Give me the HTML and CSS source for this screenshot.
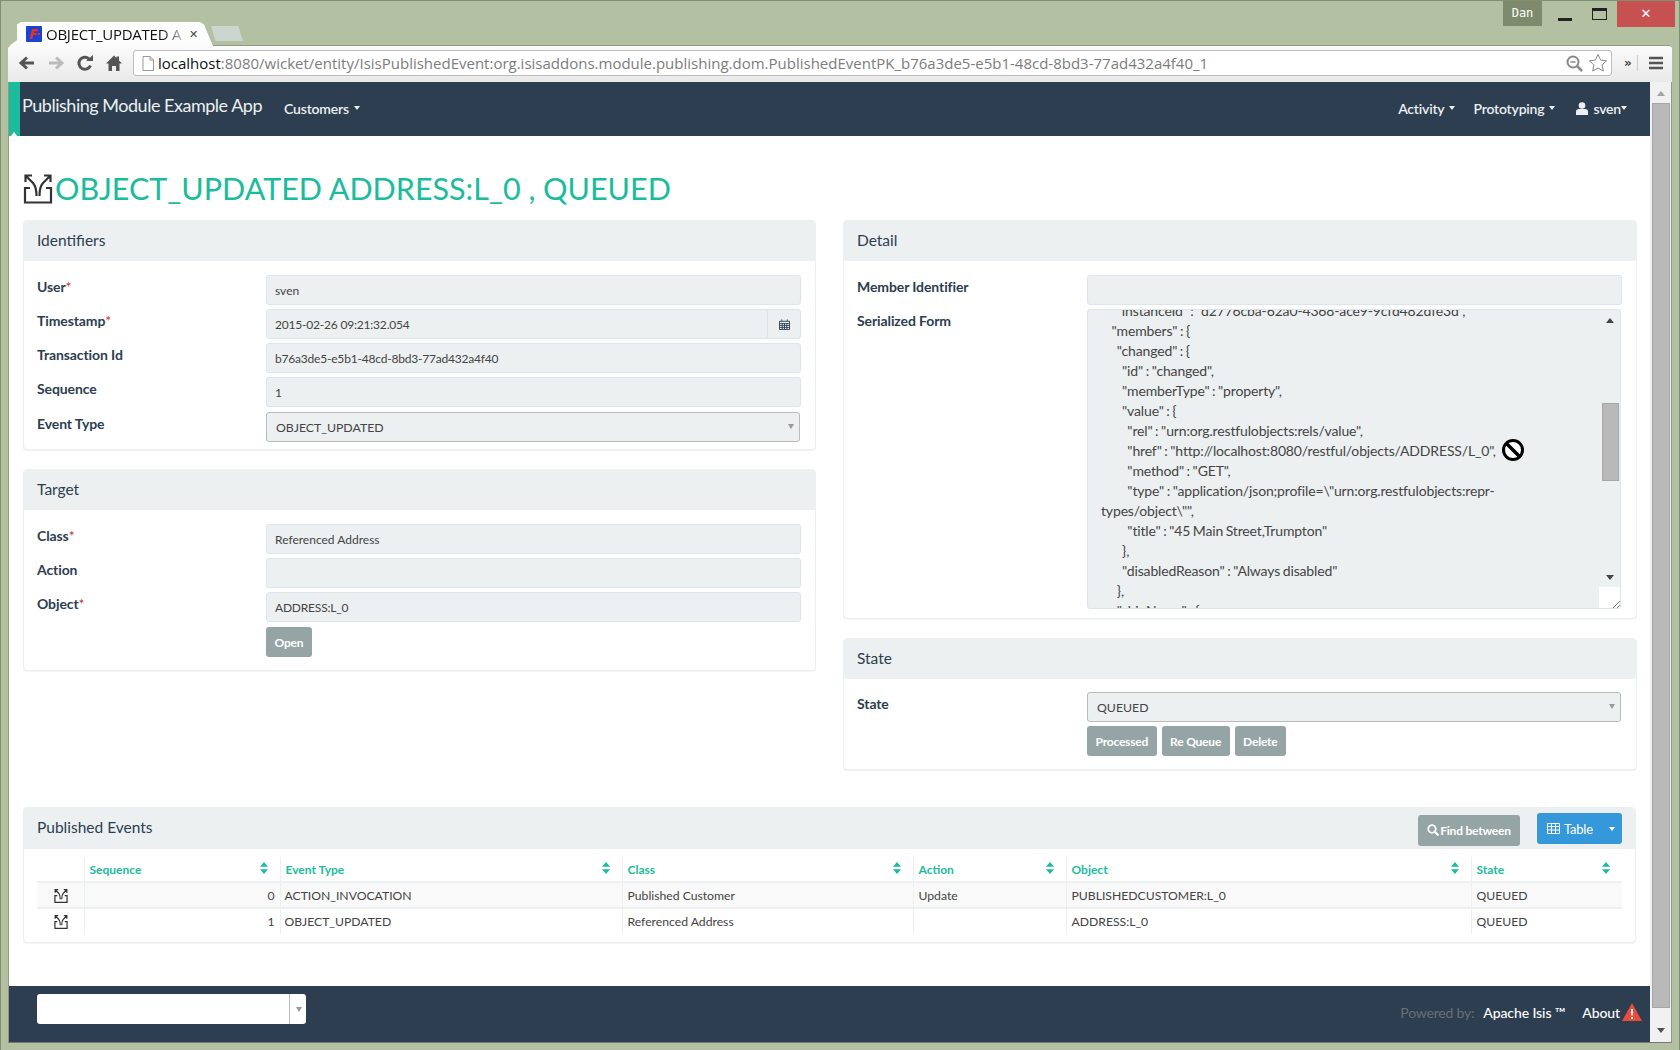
FILE: index.html
```html
<!DOCTYPE html>
<html lang="en">
<head>
<meta charset="utf-8">
<title>OBJECT_UPDATED ADDRESS:L_0 , QUEUED</title>
<link rel="stylesheet" href="styles.css">
</head>
<body>
<div class="window">
  <div class="titlebar">
    <div class="tabs">
      <div class="tab">
        <svg class="favicon" viewBox="0 0 16 16"><rect width="16" height="16" rx="1" fill="#1a43d6"/><path d="M6 3H12L11.3 5.500H8.200L7.800 7H11L10.400 9H7.200L6.400 13H3.600Z" fill="#e8321c"/><rect x="12" y="7" width="2" height="2" fill="#e8321c"/></svg>
        <span class="tab-title">OBJECT_UPDATED A</span>
        <span class="tab-close">✕</span>
      </div>
      <div class="tab-new"></div>
    </div>
    <div class="winctl">
      <div class="user-badge">Dan</div>
      <div class="win-btn"><span class="win-min"></span></div>
      <div class="win-btn"><span class="win-max"></span></div>
      <div class="win-close">✕</div>
    </div>
  </div>
  <div class="toolbar">
    <div class="tool"><svg viewBox="0 0 18 18" class="ticon"><path d="M16 9H4M9 3.500 3 9l6 5.500" fill="none" stroke="#555" stroke-width="3"/></svg></div>
    <div class="tool"><svg viewBox="0 0 18 18" class="ticon"><path d="M2 9H14M9 3.500 15 9l-6 5.500" fill="none" stroke="#bbb" stroke-width="3"/></svg></div>
    <div class="tool"><svg viewBox="0 0 18 18" class="ticon"><path d="M14.500 11.500A6 6 0 1 1 13 4.800" fill="none" stroke="#555" stroke-width="3"/><path d="M10 7H17V1Z" fill="#555"/></svg></div>
    <div class="tool"><svg viewBox="0 0 18 18" class="ticon"><path d="M9 1.500 1 9.500h2.500V17H7v-5h4v5h3.500V9.500H17l-3-3V2.500h-2.500V4Z" fill="#555"/></svg></div>
    <div class="address">
      <svg class="doc" viewBox="0 0 12 15"><path d="M1 .5H8L11.500 4V14.500H1Z M8 .5V4h3.500" fill="#fff" stroke="#999"/></svg>
      <span class="url"><span class="host">localhost</span>:8080/wicket/entity/IsisPublishedEvent:org.isisaddons.module.publishing.dom.PublishedEventPK_b76a3de5-e5b1-48cd-8bd3-77ad432a4f40_1</span>
      <svg class="zoomglass" viewBox="0 0 17 17"><circle cx="7" cy="7" r="5.500" fill="none" stroke="#8a8a8a" stroke-width="2"/><path d="M11 11l5 5" stroke="#8a8a8a" stroke-width="2.500"/><path d="M4.500 7h5" stroke="#8a8a8a" stroke-width="1.500"/></svg>
      <svg class="star" viewBox="0 0 20 20"><path d="M10 1.500l2.600 5.600 6 .7-4.500 4.100 1.200 6.100L10 15l-5.300 3 1.200-6.100L1.400 7.800l6-.7Z" fill="#fff" stroke="#8a8a8a"/></svg>
    </div>
    <div class="tool-right">
      <span class="chev">»</span>
      <span class="tsep"></span>
      <svg class="burger" viewBox="0 0 14 14"><path d="M0 2h14M0 7h14M0 12h14" stroke="#555" stroke-width="2.500"/></svg>
    </div>
  </div>
  <div class="viewport">
    <div class="page">
      <nav class="navbar">
        <div class="nav-strip"></div>
        <a class="brand">Publishing Module Example App</a>
        <a class="nav-link nav-customers">Customers<i class="caret"></i></a>
        <div class="nav-right">
          <a class="nav-link">Activity<i class="caret"></i></a>
          <a class="nav-link">Prototyping<i class="caret"></i></a>
          <a class="nav-link nav-user"><svg class="usericon" viewBox="0 0 12 13"><circle cx="6" cy="3.500" r="3.300" fill="#ecf0f1"/><path d="M0 13V9.500Q0 7 3 7H9Q12 7 12 9.500V13Z" fill="#ecf0f1"/></svg>sven<i class="caret caret-tight"></i></a>
        </div>
      </nav>
      <main class="content">
        <h1 class="page-title"><svg class="title-icon" viewBox="0 0 30 30"><path d="M7 14H2V28.500H28V14H23" fill="none" stroke="#333" stroke-width="2.200"/><path d="M2.500 8V1.500H9M2.500 1.500 10 9Q13.500 13 13.500 22M27.500 8V1.500H21M27.500 1.500 20 9Q16.500 13 16.500 22" fill="none" stroke="#333" stroke-width="2.200"/></svg>OBJECT_UPDATED ADDRESS:L_0 , QUEUED</h1>
        <div class="columns">
          <div class="column">
            <section class="panel panel-identifiers">
              <h2 class="panel-heading">Identifiers</h2>
              <div class="panel-body">
                <div class="row"><label>User<em>*</em></label><div class="field">sven</div></div>
                <div class="row"><label>Timestamp<em>*</em></label><div class="field field-date tight">2015-02-26 09:21:32.054<span class="addon"><svg class="cal" viewBox="0 0 12 12"><path d="M.5 2.500h11v9H.5ZM3 .5v2M9 .5v2M.5 5h11M.5 7.200h11M.5 9.400h11M3.500 5v6M6 5v6M8.500 5v6" fill="none" stroke="#2c3e50"/></svg></span></div></div>
                <div class="row"><label>Transaction Id</label><div class="field tight">b76a3de5-e5b1-48cd-8bd3-77ad432a4f40</div></div>
                <div class="row"><label>Sequence</label><div class="field">1</div></div>
                <div class="row row-event"><label>Event Type</label><div class="field field-select">OBJECT_UPDATED<i class="sel-arrow"></i></div></div>
              </div>
            </section>
            <section class="panel panel-target">
              <h2 class="panel-heading">Target</h2>
              <div class="panel-body">
                <div class="row"><label>Class<em>*</em></label><div class="field">Referenced Address</div></div>
                <div class="row"><label>Action</label><div class="field"></div></div>
                <div class="row"><label>Object<em>*</em></label><div class="field tight">ADDRESS:L_0</div></div>
                <div class="row row-actions"><span></span><div class="actions"><button class="btn">Open</button></div></div>
              </div>
            </section>
          </div>
          <div class="column">
            <section class="panel panel-detail">
              <h2 class="panel-heading">Detail</h2>
              <div class="panel-body">
                <div class="row"><label>Member Identifier</label><div class="field"></div></div>
                <div class="row"><label>Serialized Form</label>
                  <div class="textarea">
<pre class="json">      "instanceId" : "d2776cba-62a0-4368-ace9-9cfd482dfe3d",
    "members" : {
      "changed" : {
        "id" : "changed",
        "memberType" : "property",
        "value" : {
          "rel" : "urn:org.restfulobjects:rels/value",
          "href" : "http://localhost:8080/restful/objects/ADDRESS/L_0",
          "method" : "GET",
          "type" : "application/json;profile=\"urn:org.restfulobjects:repr-
types/object\"",
          "title" : "45 Main Street,Trumpton"
        },
        "disabledReason" : "Always disabled"
      },
      "shipName" : {</pre>
                    <div class="ta-scroll">
                      <i class="ta-up"></i>
                      <span class="ta-track"><span class="ta-thumb"></span></span>
                      <i class="ta-down"></i>
                    </div>
                    <div class="ta-corner"><svg viewBox="0 0 8 8" class="grip"><path d="M1 8 8 1M5 8 8 5" stroke="#777"/></svg></div>
                    <svg class="nodrop" viewBox="0 0 24 24"><circle cx="12" cy="12" r="9.500" fill="#fff" stroke="#000" stroke-width="3"/><path d="M5.500 5.500l13 13" stroke="#000" stroke-width="3.500"/></svg>
                  </div>
                </div>
              </div>
            </section>
            <section class="panel panel-state">
              <h2 class="panel-heading">State</h2>
              <div class="panel-body">
                <div class="row"><label>State</label><div class="field field-select">QUEUED<i class="sel-arrow"></i></div></div>
                <div class="row row-actions"><span></span><div class="actions"><button class="btn">Processed</button><button class="btn">Re Queue</button><button class="btn">Delete</button></div></div>
              </div>
            </section>
          </div>
        </div>
        <section class="panel panel-events">
          <div class="panel-heading heading-bar">
            <h2 class="heading-text">Published Events</h2>
            <button class="btn btn-find"><svg class="search" viewBox="0 0 12 12"><circle cx="5" cy="5" r="3.800" fill="none" stroke="#fff" stroke-width="1.800"/><path d="M8 8l3.500 3.500" stroke="#fff" stroke-width="2"/></svg>Find between</button>
            <button class="btn btn-table"><svg class="grid-ic" viewBox="0 0 13 11"><path d="M.5.5h12v10H.5ZM.5 3.500h12M.5 7h12M4.500.5v10M8.500.5v10" fill="none" stroke="#fff"/></svg>Table<i class="caret caret-table"></i></button>
          </div>
          <div class="table-wrap">
            <table class="events">
              <thead>
                <tr>
                  <th class="c-icon"></th>
                  <th class="c-seq"><div class="th-in">Sequence<svg class="sort" viewBox="0 0 8 12"><path d="M4 0 8 4.800H0ZM4 12 0 7.200H8Z"/></svg></div></th>
                  <th class="c-type"><div class="th-in">Event Type<svg class="sort" viewBox="0 0 8 12"><path d="M4 0 8 4.800H0ZM4 12 0 7.200H8Z"/></svg></div></th>
                  <th class="c-class"><div class="th-in">Class<svg class="sort" viewBox="0 0 8 12"><path d="M4 0 8 4.800H0ZM4 12 0 7.200H8Z"/></svg></div></th>
                  <th class="c-action"><div class="th-in">Action<svg class="sort" viewBox="0 0 8 12"><path d="M4 0 8 4.800H0ZM4 12 0 7.200H8Z"/></svg></div></th>
                  <th class="c-object"><div class="th-in">Object<svg class="sort" viewBox="0 0 8 12"><path d="M4 0 8 4.800H0ZM4 12 0 7.200H8Z"/></svg></div></th>
                  <th class="c-state"><div class="th-in">State<svg class="sort" viewBox="0 0 8 12"><path d="M4 0 8 4.800H0ZM4 12 0 7.200H8Z"/></svg></div></th>
                </tr>
              </thead>
              <tbody>
                <tr class="odd">
                  <td class="cell-icon"><svg class="row-icon" viewBox="0 0 30 30"><path d="M7 14H2V28.500H28V14H23" fill="none" stroke="#333" stroke-width="2.600"/><path d="M2.500 8V1.500H9M2.500 1.500 10 9Q13.500 13 13.500 22M27.500 8V1.500H21M27.500 1.500 20 9Q16.500 13 16.500 22" fill="none" stroke="#333" stroke-width="2.600"/></svg></td>
                  <td class="num">0</td><td class="cell-type">ACTION_INVOCATION</td><td>Published Customer</td><td>Update</td><td>PUBLISHEDCUSTOMER:L_0</td><td>QUEUED</td>
                </tr>
                <tr>
                  <td class="cell-icon"><svg class="row-icon" viewBox="0 0 30 30"><path d="M7 14H2V28.500H28V14H23" fill="none" stroke="#333" stroke-width="2.600"/><path d="M2.500 8V1.500H9M2.500 1.500 10 9Q13.500 13 13.500 22M27.500 8V1.500H21M27.500 1.500 20 9Q16.500 13 16.500 22" fill="none" stroke="#333" stroke-width="2.600"/></svg></td>
                  <td class="num">1</td><td class="cell-type">OBJECT_UPDATED</td><td>Referenced Address</td><td></td><td>ADDRESS:L_0</td><td>QUEUED</td>
                </tr>
              </tbody>
            </table>
          </div>
        </section>
      </main>
      <footer class="footer">
        <div class="foot-select"><span class="foot-arrow"><i class="sel-arrow sel-arrow-foot"></i></span></div>
        <div class="foot-right">
          <span class="powered">Powered by:</span>
          <a class="foot-link">Apache Isis ™</a>
          <a class="foot-link foot-about">About</a>
          <svg class="warn" viewBox="0 0 20 18"><path d="M10 0 20 18H0Z" fill="#e74c3c"/><path d="M9 6h2l-.300 6.500h-1.400ZM9 14h2v2H9Z" fill="#fff"/></svg>
        </div>
      </footer>
    </div>
    <div class="scrollbar">
      <i class="sb-up"></i>
      <span class="sb-track"><span class="sb-thumb"></span></span>
      <i class="sb-down"></i>
    </div>
  </div>
</div>
</body>
</html>
```
FILE: styles.css
```css
* { box-sizing: border-box; }
html, body { margin: 0; height: 100%; }
body { background: #b3c0a1; font-family: Lato, "Noto Sans", sans-serif; color: #2c3e50; overflow: hidden; }
.window { height: 1050px; display: flex; flex-direction: column; border: 1px solid #7f8f72; border-bottom-width: 0; }

.titlebar { height: 44px; display: flex; justify-content: space-between; align-items: flex-start; flex: none; }
.tabs { display: flex; align-items: flex-end; height: 45px; padding-left: 8px; position: relative; z-index: 1; }
.tab { width: 204px; height: 24px; background: linear-gradient(#fff, #fbfbfb); display: flex; align-items: center; padding: 0 0 0 17px; clip-path: polygon(0 100%, 4% 75%, 8px 10%, 12px 0, calc(100% - 13px) 0, calc(100% - 9px) 10%, 100% 100%); }
.favicon { width: 16px; height: 16px; flex: none; margin-right: 4px; }
.tab-title { width: 137px; flex: none; white-space: nowrap; font: 15px "Open Sans", sans-serif; letter-spacing: -.25px; color: #111; -webkit-mask-image: linear-gradient(90deg, #000 84%, rgba(0,0,0,.25) 100%); mask-image: linear-gradient(90deg, #000 84%, rgba(0,0,0,.25) 100%); }
.tab-close { font: bold 11px "DejaVu Sans", sans-serif; color: #444; margin-left: 6px; }
.tab-new { width: 32px; height: 15px; margin: 0 0 5px -2px; background: #ccd5cf; clip-path: polygon(0 0, 85% 0, 100% 100%, 14% 100%); }
.winctl { display: flex; align-items: flex-start; }
.user-badge { width: 39px; height: 25px; background: #7d8a6b; color: #fff; font: 12px/25px "DejaVu Sans Mono", monospace; text-align: center; }
.win-btn { width: 34px; height: 25px; display: flex; align-items: center; justify-content: center; }
.user-badge + .win-btn { margin-left: 6px; }
.win-min { width: 14px; height: 3px; background: #222; margin-top: 11px; }
.win-max { width: 15px; height: 12px; border: 1px solid #222; border-top-width: 3px; }
.win-close { width: 58px; height: 26px; margin: 0 4px 0 1px; background: #c75050; color: #fff; font: bold 13px/26px "DejaVu Sans", sans-serif; text-align: center; }

.toolbar { height: 37px; flex: none; margin: 0 7px; display: flex; align-items: center; padding: 0 0 2px 4px; background: linear-gradient(#fbfbfb, #e9e9e9); border-top: 1px solid #8e9a83; border-radius: 3px 3px 0 0; }
.tool { width: 29px; height: 18px; display: flex; justify-content: center; }
.ticon { width: 18px; height: 18px; }
.address { flex: 1; height: 26px; margin-left: 5px; display: flex; align-items: center; background: #fff; border: 1px solid #bdbdbd; border-radius: 3px; padding: 0 3px 0 8px; }
.doc { width: 12px; height: 15px; flex: none; margin-right: 4px; }
.url { flex: 1; white-space: nowrap; overflow: hidden; font: 15px "Open Sans", sans-serif; color: #7d7d7d; }
.host { color: #111; }
.zoomglass { width: 17px; height: 17px; margin-right: 5px; flex: none; }
.star { width: 20px; height: 20px; flex: none; }
.tool-right { width: 60px; flex: none; display: flex; align-items: center; padding-left: 12px; }
.chev { font: bold 12px "DejaVu Sans", sans-serif; color: #444; }
.tsep { width: 1px; height: 16px; background: #ccc; margin: 0 11px 0 5px; }
.burger { width: 14px; height: 14px; }

.viewport { flex: 1; display: flex; margin: 0 7px 7px; border: 1px solid #8e9a83; border-top: 0; border-bottom: 1px solid #777; background: #fff; min-height: 0; }
.page { flex: 1; display: flex; flex-direction: column; min-width: 0; }
.scrollbar { width: 21px; flex: none; background: #f1f1f1; display: flex; flex-direction: column; align-items: center; }
.sb-up { margin-top: 9px; border: 4px solid transparent; border-top: 0; border-bottom: 5px solid #a3a3a3; }
.sb-track { flex: 1; width: 100%; padding: 7px 1px 20px 2px; display: block; }
.sb-thumb { display: block; height: 100%; background: #b9b9b9; border: 1px solid #a6a6a6; }
.sb-down { margin-bottom: 9px; border: 4px solid transparent; border-bottom: 0; border-top: 5px solid #505050; }

.navbar { height: 54px; flex: none; background: #2c3e50; display: flex; align-items: center; position: relative; color: #ecf0f1; }
.nav-strip { position: absolute; left: 0; top: 0; bottom: 0; width: 11px; background: #1abc9c; }
.nav-strip::after { content: ""; position: absolute; left: 2px; bottom: 0; border: 3.500px solid transparent; border-top: 0; border-bottom: 4px solid #fff; }
.brand { margin-left: 13px; font-size: 18px; letter-spacing: -.48px; position: relative; top: -4px; color: #ecf0f1; white-space: nowrap; }
.nav-link { font-size: 14px; font-weight: 600; color: #ecf0f1; display: flex; align-items: center; letter-spacing: -.2px; white-space: nowrap; padding-bottom: 2px; }
.nav-customers { margin-left: 22px; }
.nav-right { margin-left: auto; display: flex; align-items: center; gap: 18px; padding-right: 23px; }
.nav-user { margin-left: 3px; }
.caret { display: inline-block; margin-left: 5px; border: 3.500px solid transparent; border-top: 4px solid #ecf0f1; border-bottom: 0; }
.caret-tight { margin-left: 0; }
.usericon { width: 12px; height: 13px; margin-right: 5px; }

.content { flex: 1; padding: 0 14px; min-height: 0; }
.page-title { height: 84px; margin: 0; display: flex; align-items: center; padding-top: 19px; font-size: 30.500px; font-weight: 400; color: #1abc9c; white-space: nowrap; }
.title-icon { width: 30px; height: 30px; margin: 3px 2px 0 0; }
.columns { display: grid; grid-template-columns: 793px 794px; column-gap: 27px; }
.panel { border: 1px solid #ecf0f1; border-radius: 4px; box-shadow: 0 1px 1px rgba(0,0,0,.05); background: #fff; overflow: hidden; }
.panel-heading { margin: 0; height: 40px; background: #ecf0f1; padding-left: 13px; font-size: 15.500px; font-weight: 400; line-height: 38px; color: #2c3e50; }
.panel-body { padding: 14px 14px 8px 13px; display: flex; flex-direction: column; gap: 4px; }
.panel-target { margin-top: 19px; }
.panel-state { margin-top: 19px; }
.panel-identifiers { height: 230px; }
.panel-target { height: 202px; }
.panel-detail { height: 399px; }
.panel-state { height: 132px; }
.panel-state .panel-body { padding-top: 13px; }
.panel-state .row-actions { margin-top: 0; }
.panel-events { margin-top: 37px; height: 136px; }
.row { display: grid; grid-template-columns: 229px 1fr; }
.row-event { margin-top: 1px; }
.panel-detail .row, .panel-state .row { grid-template-columns: 230px 1fr; }
label { font-size: 14px; font-weight: 700; line-height: 24px; letter-spacing: -.1px; }
label em { color: #c0392b; font-style: normal; font-weight: 400; }
.field { height: 30px; background: #ecf0f1; border: 1px solid #dce4ec; border-radius: 3px; padding: 0 8px; font-size: 12px; line-height: 30px; color: #444; position: relative; white-space: nowrap; }
.tight { letter-spacing: -.2px; }
.field-date { padding-right: 0; display: flex; justify-content: space-between; }
.addon { width: 33px; height: 28px; border-left: 1px solid #dce4ec; display: flex; align-items: center; justify-content: center; flex: none; }
.cal { width: 11px; height: 11px; }
.field-select { border: 1px solid #bbb; padding-left: 9px; margin-right: 1px; font-size: 12.300px; }
.sel-arrow { position: absolute; right: 5px; top: 11px; border: 3.500px solid transparent; border-top: 5px solid #999; border-bottom: 0; }
.row-actions { margin-top: 1px; }
.actions { display: flex; gap: 5px; }
.btn { height: 30px; padding: 0 8.500px; border: 0; border-radius: 3px; background: #95a5a6; color: #fff; font: 700 12px Lato, sans-serif; letter-spacing: -.2px; }

.textarea { height: 300px; background: #ecf0f1; border: 1px solid #dce4ec; border-radius: 3px; overflow: hidden; position: relative; margin-right: 1px; }
.json { margin: -9px 0 0; padding: 0 26px 0 13px; font: 14px/20px Lato, sans-serif; letter-spacing: -.15px; word-spacing: -.8px; color: #444; white-space: pre-wrap; }
.ta-scroll { position: absolute; top: 0; right: 0; width: 20px; bottom: 21px; display: flex; flex-direction: column; align-items: center; }
.ta-up { margin-top: 8px; border: 4px solid transparent; border-top: 0; border-bottom: 5px solid #444; }
.ta-down { margin-bottom: 8px; border: 4px solid transparent; border-bottom: 0; border-top: 5px solid #444; }
.ta-track { flex: 1; width: 100%; padding-top: 80px; padding-bottom: 94px; display: block; padding-left: 2px; padding-right: 1px; }
.ta-thumb { display: block; height: 78px; background: #b9b9b9; border: 1px solid #a6a6a6; }
.ta-corner { position: absolute; right: 0; bottom: 0; width: 21px; height: 21px; background: #fff; display: flex; align-items: flex-end; justify-content: flex-end; }
.grip { width: 8px; height: 8px; }
.nodrop { position: absolute; left: 413px; top: 128px; width: 24px; height: 24px; }

.heading-bar { display: flex; align-items: center; padding-right: 13px; height: 41px; }
.heading-text { margin: -4px auto 0 0; font-size: 15.500px; font-weight: 400; line-height: 38px; }
.btn-find { height: 31px; width: 102px; padding: 0; margin: 3px 17px 0 0; display: flex; align-items: center; justify-content: center; }
.search { width: 12px; height: 12px; margin-right: 1px; }
.btn-table { height: 31px; width: 85px; background: #3498db; font: 400 13px Lato, sans-serif; display: flex; align-items: center; padding: 0 0 0 10px; margin-top: 0; }
.grid-ic { width: 13px; height: 11px; margin-right: 4px; }
.caret-table { margin-left: 16px; border-top-color: #fff; }

.table-wrap { padding: 8px 14px 0 13px; }
.events { width: 1585px; border-collapse: collapse; table-layout: fixed; font-size: 12.200px; color: #444; }
.events th { height: 25px; padding: 0 5px; border-left: 1px solid #ecf0f1; border-bottom: 2px solid #ecf0f1; color: #1abc9c; font-weight: 700; font-size: 12px; text-align: left; vertical-align: top; }
.events th:first-child, .events td:first-child { border-left: 0; }
.th-in { display: flex; justify-content: space-between; align-items: flex-start; padding-top: 5px; padding-right: 7px; }
.sort { width: 8px; height: 12px; fill: #1abc9c; }
.events td { height: 26px; padding: 0 5px; border-left: 1px solid #ecf0f1; border-bottom: 2px solid #ecf0f1; white-space: nowrap; }
.events tbody tr:last-child td { border-bottom: 0; }
.events .cell-type { padding-left: 4px; }
.events .cell-icon { padding: 0 4px 0 6px; }
.odd td { background: #f9f9f9; padding-top: 1px; }
.num { text-align: right; }
.row-icon { width: 14px; height: 14px; display: block; margin: 1px auto 0; }
.c-icon { width: 47px; }
.c-seq { width: 196px; }
.c-type { width: 342px; }
.c-class { width: 291px; }
.c-action { width: 153px; }
.c-object { width: 405px; }
.c-state { width: 151px; }

.footer { height: 56px; flex: none; background: #2c3e50; display: flex; align-items: flex-start; padding: 8px 8px 0 28px; }
.foot-select { width: 269px; height: 30px; background: #fff; border-radius: 3px; display: flex; justify-content: flex-end; }
.foot-arrow { width: 17px; border-left: 1px solid #bbb; position: relative; display: block; }
.sel-arrow-foot { right: 4px; top: 13px; }
.foot-right { margin-left: auto; display: flex; align-items: center; height: 36px; font-size: 14px; letter-spacing: -.1px; }
.powered { color: #6a6f73; margin-right: 9px; letter-spacing: -.2px; }
.foot-link { color: #fff; font-weight: 500; }
.foot-about { margin-left: 17px; }
.warn { width: 20px; height: 18px; margin-left: 2px; }
```
